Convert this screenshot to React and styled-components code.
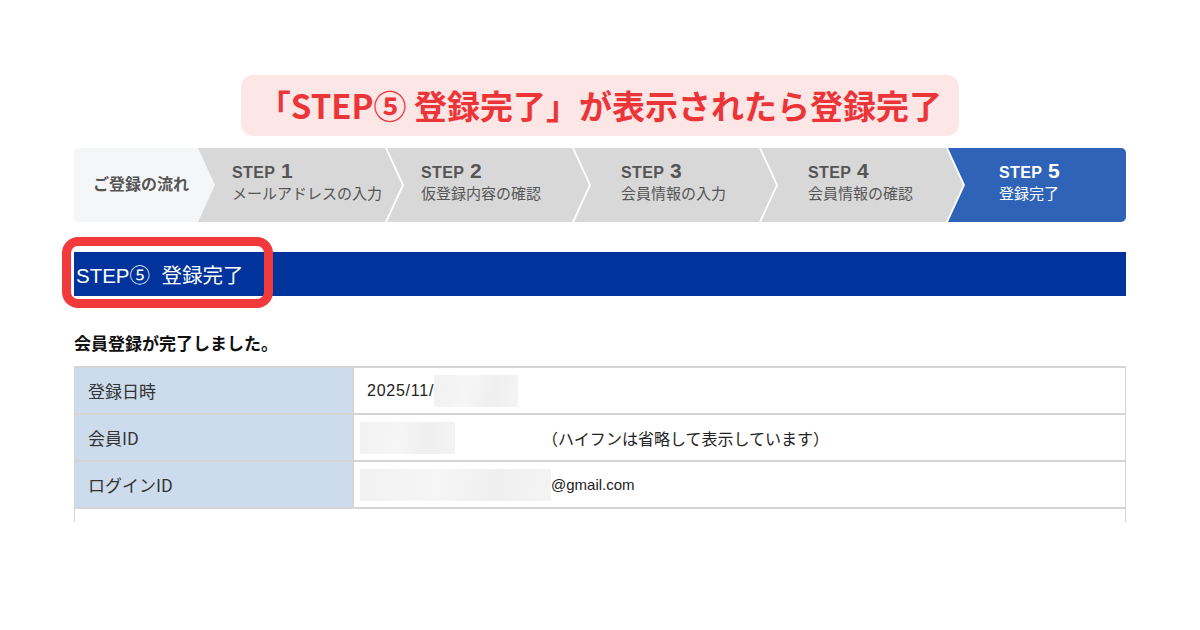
import React from "react";
import styled, { createGlobalStyle } from "styled-components";

const GlobalStyle = createGlobalStyle`
  body {
    margin: 0;
    background: #fff;
    font-family: "Liberation Sans", "Noto Sans CJK JP", sans-serif;
    color: #222;
  }
  * {
    box-sizing: border-box;
  }
`;

const steps = [
  { no: 1, label: "メールアドレスの入力", pad: 34 },
  { no: 2, label: "仮登録内容の確認", pad: 34 },
  { no: 3, label: "会員情報の入力", pad: 47 },
  { no: 4, label: "会員情報の確認", pad: 47 },
  { no: 5, label: "登録完了", pad: 51, active: true },
];

const App = () => {
  return (
    <>
      <GlobalStyle />
      <Page>
        <Banner>
          <BannerText>「STEP⑤ 登録完了」が表示されたら登録完了</BannerText>
        </Banner>

        <StepBar>
          <FlowTitle>ご登録の流れ</FlowTitle>
          {steps.map((s, i) => (
            <StepItem key={s.no} $first={i === 0} $active={s.active} $pad={s.pad}>
              <StepText>
                <StepNo>
                  STEP <b>{s.no}</b>
                </StepNo>
                <StepLabel>{s.label}</StepLabel>
              </StepText>
            </StepItem>
          ))}
        </StepBar>

        <Heading>
          STEP⑤&nbsp;&nbsp;登録完了
          <Highlight />
        </Heading>

        <Message>会員登録が完了しました。</Message>

        <TableFold>
          <InfoTable>
            <InfoRow>
              <LabelCell>登録日時</LabelCell>
              <ValueCell>
                <DateText>2025/11/</DateText>
                <Redact $w={84} />
              </ValueCell>
            </InfoRow>
            <InfoRow>
              <LabelCell>会員ID</LabelCell>
              <ValueCell $tight>
                <Redact $w={95} />
                <Note>（ハイフンは省略して表示しています）</Note>
              </ValueCell>
            </InfoRow>
            <InfoRow>
              <LabelCell>ログインID</LabelCell>
              <ValueCell $tight>
                <Redact $w={191} />
                <Mail>@gmail.com</Mail>
              </ValueCell>
            </InfoRow>
            <InfoRow $plain>
              <LabelCell $plain>会員区分 種別</LabelCell>
              <ValueCell />
            </InfoRow>
          </InfoTable>
        </TableFold>
      </Page>
    </>
  );
};

const Page = styled.div`
  width: 1052px;
  margin: 0 auto;
  padding-top: 75px;
  display: flex;
  flex-direction: column;
`;

const Banner = styled.div`
  align-self: center;
  width: 718px;
  height: 61px;
  background: #fde6e6;
  border-radius: 12px;
  display: flex;
  align-items: center;
  justify-content: center;
`;

const BannerText = styled.div`
  font-family: "Noto Sans CJK JP", sans-serif;
  font-weight: 700;
  font-size: 33px;
  color: #ec3538;
  white-space: nowrap;
  margin-top: -2px;
`;

const StepBar = styled.div`
  margin-top: 12px;
  height: 74px;
  display: flex;
  background: #fff;
`;

const FlowTitle = styled.div`
  position: relative;
  z-index: 1;
  flex: 0 0 141px;
  margin-right: -17px;
  background: #f5f6f8;
  border-radius: 4px 0 0 4px;
  clip-path: polygon(0 0, calc(100% - 17px) 0, 100% 50%, calc(100% - 17px) 100%, 0 100%);
  display: flex;
  align-items: center;
  padding: 0 0 4px 19px;
  font-weight: 700;
  font-size: 16px;
  color: #555;
`;

const StepItem = styled.div`
  flex: 0 0 ${(p) => (p.$active ? 178 : p.$first ? 204 : 202)}px;
  margin-left: ${(p) => (p.$first ? 0 : -15)}px;
  background: ${(p) => (p.$active ? "#2f63b8" : "#d8d8d8")};
  color: ${(p) => (p.$active ? "#fff" : "#555")};
  border-radius: ${(p) => (p.$active ? "0 5px 5px 0" : "0")};
  clip-path: ${(p) =>
    p.$active
      ? "polygon(0 0, 100% 0, 100% 100%, 0 100%, 17px 50%)"
      : p.$first
      ? "polygon(0 0, calc(100% - 17px) 0, 100% 50%, calc(100% - 17px) 100%, 0 100%)"
      : "polygon(0 0, calc(100% - 17px) 0, 100% 50%, calc(100% - 17px) 100%, 0 100%, 17px 50%)"};
  display: flex;
  align-items: center;
  padding: 0 0 6px ${(p) => p.$pad}px;
`;

const StepText = styled.div`
  display: flex;
  flex-direction: column;
  gap: 1px;
`;

const StepNo = styled.div`
  font-weight: 700;
  font-size: 16px;
  line-height: 21px;
  letter-spacing: 0.4px;
  b {
    font-size: 21px;
    margin-left: 1px;
  }
`;

const StepLabel = styled.div`
  font-size: 15px;
  line-height: 20px;
  white-space: nowrap;
`;

const Heading = styled.div`
  position: relative;
  margin-top: 30px;
  height: 44px;
  background: #00339b;
  color: #fff;
  font-family: "Liberation Sans", "Noto Sans CJK JP", sans-serif;
  font-size: 20.5px;
  display: flex;
  align-items: center;
  padding-left: 2px;
`;

const Highlight = styled.div`
  position: absolute;
  left: -12px;
  top: -15px;
  width: 211px;
  height: 71px;
  border: 9px solid #f23a3c;
  border-radius: 16px;
`;

const Message = styled.div`
  margin-top: 36px;
  font-family: "Noto Sans CJK JP", sans-serif;
  font-weight: 700;
  font-size: 17px;
  line-height: 22px;
  color: #111;
`;

const TableFold = styled.div`
  margin-top: 12px;
  height: 156px;
  overflow: hidden;
`;

const InfoTable = styled.div`
  display: flex;
  flex-direction: column;
  border-left: 1px solid #d3d3d3;
  border-right: 1px solid #d3d3d3;
`;

const InfoRow = styled.div`
  display: grid;
  grid-template-columns: 279px 1fr;
  height: 47px;
  border-top: 2px solid #d5d5d5;
`;

const LabelCell = styled.div`
  background: ${(p) => (p.$plain ? "#fff" : "#cddced")};
  border-right: ${(p) => (p.$plain ? "none" : "2px solid #d5d5d5")};
  display: flex;
  align-items: ${(p) => (p.$plain ? "flex-start" : "center")};
  padding: ${(p) => (p.$plain ? "8px 0 0 28px" : "0 0 0 13px")};
  font-family: "Noto Sans CJK JP", sans-serif;
  font-size: 17px;
  color: ${(p) => (p.$plain ? "#bbb" : "#333")};
`;

const ValueCell = styled.div`
  display: flex;
  align-items: center;
  padding-left: ${(p) => (p.$tight ? 6 : 13)}px;
  font-family: "Liberation Sans", "Noto Sans CJK JP", sans-serif;
  font-size: 16px;
  color: #222;
`;

const DateText = styled.span`
  letter-spacing: 0.75px;
`;

const Mail = styled.span`
  font-size: 15px;
`;

const Redact = styled.div`
  width: ${(p) => p.$w}px;
  height: 32px;
  background: linear-gradient(100deg, #f1f1f1 0%, #f6f6f6 40%, #efefef 70%, #f4f4f4 100%);
  flex-shrink: 0;
`;

const Note = styled.span`
  margin-left: 87px;
  font-family: "Noto Sans CJK JP", sans-serif;
`;

export default App;
